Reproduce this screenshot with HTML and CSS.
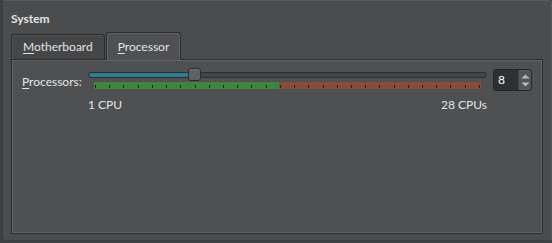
FILE: index.html
```html
<!DOCTYPE html>
<html lang="en">
<head>
    <meta charset="UTF-8">
    <title>System - Processor</title>
    <link rel="stylesheet" href="styles.css">
</head>
<body>
    <div class="group">
        <div class="group-title">System</div>

        <div class="tabs">
            <div class="tab"><u>M</u>otherboard</div>
            <div class="tab active"><u>P</u>rocessor</div>
        </div>

        <div class="pane">
            <div class="cpu-row">
                <div class="cpu-label"><u>P</u>rocessors:</div>

                <div class="cpu-slider">
                    <div class="groove">
                        <div class="groove-fill"></div>
                        <div class="handle"></div>
                    </div>
                    <div class="scale">
                        <div class="ticks">
                            <span></span><span></span><span></span><span></span>
                            <span></span><span></span><span></span><span></span>
                            <span></span><span></span><span></span><span></span>
                            <span></span><span></span><span></span><span></span>
                            <span></span><span></span><span></span><span></span>
                            <span></span><span></span><span></span><span></span>
                            <span></span><span></span><span></span><span></span>
                        </div>
                    </div>
                    <div class="scale-labels">
                        <span>1 CPU</span>
                        <span>28 CPUs</span>
                    </div>
                </div>

                <div class="spin">
                    <div class="spin-value">8</div>
                    <div class="spin-buttons">
                        <svg width="9" height="5" viewBox="0 0 9 5"><path d="M0.5 4.5 L4.5 0.5 L8.5 4.5 Z" fill="#b9babc"/></svg>
                        <svg width="9" height="5" viewBox="0 0 9 5"><path d="M0.5 0.5 L4.5 4.5 L8.5 0.5 Z" fill="#b9babc"/></svg>
                    </div>
                </div>
            </div>
        </div>
    </div>
</body>
</html>
```

FILE: styles.css
```css
:root {
    --bg: #4b4c4e;
    --pane: #4f5052;
    --tab: #454648;
    --dark: #2c2d2f;
    --light: #626365;
    --text: #e4e4e4;
    --teal: #2f7e8c;
    --green: #3c873d;
    --red: #884d39;
}

* {
    margin: 0;
    padding: 0;
    box-sizing: border-box;
}

body {
    width: 552px;
    height: 243px;
    background-color: #3f4042;
    font-family: Lato, "Noto Sans", sans-serif;
    font-size: 12px;
    color: var(--text);
    overflow: hidden;
}

u {
    text-decoration-thickness: 1px;
    text-underline-offset: 2px;
}

.group {
    height: 241px;
    margin-left: 2px;
    background-color: var(--bg);
    border: 1px solid #3a3b3d;
    border-top-color: #58595b;
    border-right-color: #58595b;
    border-radius: 0 4px 0 4px;
    padding: 0 8px 0 8px;
}

.group-title {
    font-weight: 700;
    height: 31px;
    padding-top: 9px;
    line-height: 18px;
}

.tabs {
    display: flex;
    align-items: flex-end;
    height: 27px;
}

.tab {
    height: 25px;
    padding: 0 11px;
    line-height: 24px;
    background-color: var(--tab);
    border: 1px solid var(--dark);
    border-bottom: none;
    border-radius: 3px 3px 0 0;
    box-shadow: inset 1px 1px 0 #525355;
}

.tab.active {
    height: 28px;
    margin-left: 1px;
    margin-bottom: -1px;
    position: relative;
    padding-top: 2px;
    background-color: var(--pane);
    box-shadow: inset 1px 1px 0 var(--light), inset -1px 0 0 var(--light);
}

.pane {
    width: 532px;
    height: 175px;
    background-color: var(--pane);
    border: 1px solid var(--dark);
    box-shadow: inset 1px 1px 0 var(--light), inset -1px -1px 0 var(--light);
    padding: 8px 10px 0 10px;
}

.cpu-row {
    display: flex;
    align-items: flex-start;
}

.cpu-label {
    width: 66px;
    padding-top: 5px;
    line-height: 18px;
}

.cpu-slider {
    width: 399px;
    display: flex;
    flex-direction: column;
}

.groove {
    position: relative;
    height: 6px;
    margin-top: 4px;
    background-color: #444547;
    border: 1px solid var(--dark);
    border-radius: 3px;
}

.groove-fill {
    width: 104px;
    height: 4px;
    background-color: var(--teal);
    border-radius: 2px 0 0 2px;
}

.handle {
    position: absolute;
    left: 99px;
    top: -5px;
    width: 13px;
    height: 13px;
    background-color: #606163;
    border: 1px solid #2a2b2d;
    border-radius: 3px;
    box-shadow: inset 0 1px 0 #727375;
}

.scale {
    position: relative;
    height: 7px;
    margin: 4px 6px 0 6px;
    background: linear-gradient(to right, var(--green) 0, var(--green) 185px, var(--red) 185px);
}

.ticks {
    position: absolute;
    left: 1px;
    right: 1px;
    bottom: 1px;
    display: flex;
    justify-content: space-between;
}

.ticks span {
    width: 1px;
    height: 3px;
    background-color: #1f2021;
}

.scale-labels {
    display: flex;
    justify-content: space-between;
    margin-top: 7px;
    line-height: 18px;
}

.spin {
    display: flex;
    width: 39px;
    height: 22px;
    margin-left: 6px;
    margin-top: 1px;
    background-color: #2f3032;
    border: 1px solid #262729;
    border-radius: 3px;
    overflow: hidden;
}

.spin-value {
    flex: 1;
    padding-left: 4px;
    line-height: 20px;
    color: #ffffff;
}

.spin-buttons {
    width: 13px;
    display: flex;
    flex-direction: column;
    justify-content: center;
    align-items: center;
    gap: 3px;
    background-color: #555659;
    border-left: 1px solid #3c3d3f;
}
```
